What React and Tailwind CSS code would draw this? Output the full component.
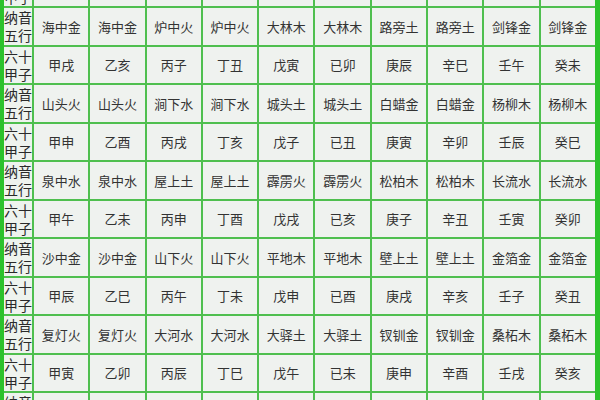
const rows = [
  ["六十|甲子", "甲子", "乙丑", "丙寅", "丁卯", "戊辰", "己巳", "庚午", "辛未", "壬申", "癸酉"],
  ["纳音|五行", "海中金", "海中金", "炉中火", "炉中火", "大林木", "大林木", "路旁土", "路旁土", "剑锋金", "剑锋金"],
  ["六十|甲子", "甲戌", "乙亥", "丙子", "丁丑", "戊寅", "已卯", "庚辰", "辛巳", "壬午", "癸未"],
  ["纳音|五行", "山头火", "山头火", "涧下水", "涧下水", "城头土", "城头土", "白蜡金", "白蜡金", "杨柳木", "杨柳木"],
  ["六十|甲子", "甲申", "乙酉", "丙戌", "丁亥", "戊子", "已丑", "庚寅", "辛卯", "壬辰", "癸巳"],
  ["纳音|五行", "泉中水", "泉中水", "屋上土", "屋上土", "霹雳火", "霹雳火", "松柏木", "松柏木", "长流水", "长流水"],
  ["六十|甲子", "甲午", "乙未", "丙申", "丁酉", "戊戌", "已亥", "庚子", "辛丑", "壬寅", "癸卯"],
  ["纳音|五行", "沙中金", "沙中金", "山下火", "山下火", "平地木", "平地木", "壁上土", "壁上土", "金箔金", "金箔金"],
  ["六十|甲子", "甲辰", "乙巳", "丙午", "丁未", "戊申", "已酉", "庚戌", "辛亥", "壬子", "癸丑"],
  ["纳音|五行", "复灯火", "复灯火", "大河水", "大河水", "大驿土", "大驿土", "钗钏金", "钗钏金", "桑柘木", "桑柘木"],
  ["六十|甲子", "甲寅", "乙卯", "丙辰", "丁巳", "戊午", "已未", "庚申", "辛酉", "壬戌", "癸亥"],
  ["纳音|五行", "大溪水", "大溪水", "沙中土", "沙中土", "天上火", "天上火", "石榴木", "石榴木", "大海水", "大海水"],
];

const App = () => {
  return (
    <div
      className="flex w-[600px] h-[400px] overflow-hidden bg-[#4fbf4f]"
      style={{ fontFamily: '"Noto Sans CJK SC", "Noto Sans", sans-serif' }}
    >
      <div className="w-[4px] shrink-0 bg-[#2cc22c]"></div>
      <div className="flex-1 overflow-hidden">
        <div className="grid grid-cols-[28px_repeat(10,1fr)] auto-rows-[36.5px] gap-[2px] mt-[-30.5px]">
          {rows.map((row, i) =>
            row.map((cell, j) =>
              j === 0 ? (
                <div
                  key={i + "-" + j}
                  className="bg-[#eef3ee] flex flex-col justify-center overflow-hidden text-[14px] leading-[18px] text-[#2a2a2a] whitespace-nowrap"
                >
                  <span>{cell.split("|")[0]}</span>
                  <span>{cell.split("|")[1]}</span>
                </div>
              ) : (
                <div
                  key={i + "-" + j}
                  className="bg-[#eff2ef] flex items-center justify-center text-[13px] text-[#333333] whitespace-nowrap"
                >
                  {cell}
                </div>
              )
            )
          )}
        </div>
      </div>
      <div className="w-[5px] shrink-0 bg-[#2cc22c]"></div>
    </div>
  );
};

export default App;
